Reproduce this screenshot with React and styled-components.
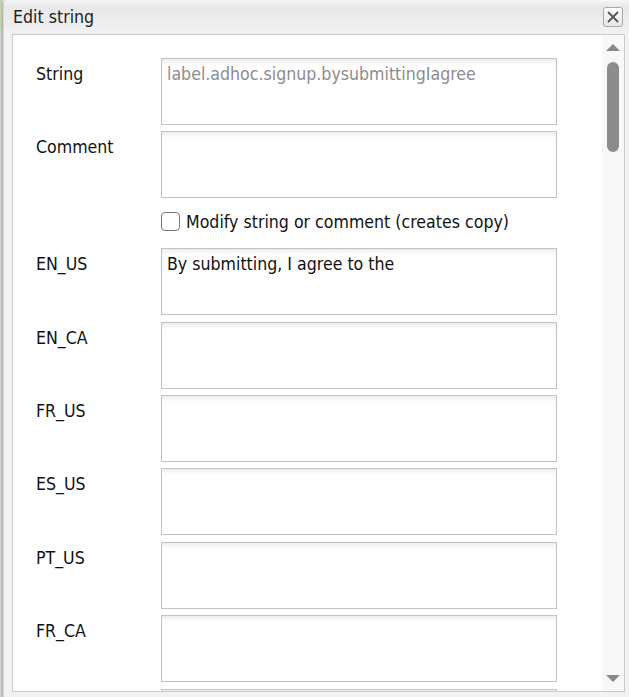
import { Fragment } from "react";
import styled, { createGlobalStyle } from "styled-components";

const GlobalStyle = createGlobalStyle`
  html, body {
    margin: 0;
    padding: 0;
    height: 100%;
    overflow: hidden;
    background: #f2f2f2;
  }
  #root {
    height: 100%;
  }
`;

const Page = styled.div`
  display: flex;
  height: 697px;
  font-family: "DejaVu Sans Condensed", "DejaVu Sans", sans-serif;
  font-size: 17.6px;
  color: #111;
`;

const Backdrop = styled.div`
  width: 3px;
  flex: none;
  background: linear-gradient(to bottom, #c6d0b6 0, #c6d0b6 30px, #cfcfcf 30px);
`;

const Dialog = styled.div`
  flex: 1;
  display: flex;
  flex-direction: column;
  background: #f2f2f2;
  border-top-left-radius: 5px;
  border-left: 1px solid #d6d6d6;
  box-shadow: -1px 0 2px rgba(0, 0, 0, 0.15);
  overflow: hidden;
`;

const TitleBar = styled.div`
  height: 34px;
  flex: none;
  display: flex;
  align-items: center;
  justify-content: space-between;
  padding: 0 6px 0 9px;
  background: linear-gradient(#f7f7f7 0, #e8e8e8 20%, #f1f1f1 100%);
`;

const Title = styled.span`
  color: #222;
  padding-bottom: 1px;
`;

const CloseButton = styled.button`
  width: 20px;
  height: 20px;
  padding: 0;
  display: flex;
  align-items: center;
  justify-content: center;
  border: 1px solid #a9a9a9;
  border-radius: 3px;
  background: linear-gradient(#ffffff, #e6e6e6);
  cursor: pointer;
`;

const Body = styled.div`
  flex: 1;
  min-height: 0;
  padding: 0 4px 5px 8px;
  display: flex;
`;

const Panel = styled.div`
  flex: 1;
  display: flex;
  min-height: 0;
  background: #fff;
  border: 1px solid #cbcbcb;
`;

const ScrollArea = styled.div`
  flex: 1;
  overflow: hidden;
  padding: 23px 0 0 23px;
`;

const Form = styled.div`
  display: grid;
  grid-template-columns: 125px 396px;
  row-gap: 6.4px;
`;

const Label = styled.div`
  padding-top: 6px;
  line-height: 20px;
  color: #111;
`;

const Field = styled.div`
  height: 67px;
  box-sizing: border-box;
  border: 1px solid #c3c3c3;
  background: #fff;
  box-shadow: inset 0 5px 6px -4px rgba(0, 0, 0, 0.12);
  padding: 5px 5px;
  line-height: 20px;
  white-space: nowrap;
  color: ${(p) => (p.$muted ? "#8c8c8c" : "#111")};
`;

const CheckRow = styled.label`
  grid-column: 2;
  height: 37px;
  display: flex;
  align-items: center;
  gap: 6px;
  padding-bottom: 3px;
  box-sizing: border-box;
`;

const Box = styled.span`
  width: 19px;
  height: 19px;
  box-sizing: border-box;
  border: 1.5px solid #767676;
  border-radius: 4px;
  background: #fff;
`;

const Scrollbar = styled.div`
  width: 22px;
  flex: none;
  background: #f8f8f8;
  display: flex;
  flex-direction: column;
  align-items: center;
  padding: 9px 0 9px;
  box-sizing: border-box;
`;

const Arrow = styled.div`
  width: 0;
  height: 0;
  border-left: 7px solid transparent;
  border-right: 7px solid transparent;
  ${(p) =>
    p.$down
      ? "border-top: 7px solid #8a8a8a; margin-top: auto;"
      : "border-bottom: 7px solid #8a8a8a;"}
`;

const Thumb = styled.div`
  width: 12px;
  height: 90px;
  margin-top: 11px;
  border-radius: 6px;
  background: #8c8c8c;
`;

const locales = [
  { code: "EN_US", value: "By submitting, I agree to the" },
  { code: "EN_CA", value: "" },
  { code: "FR_US", value: "" },
  { code: "ES_US", value: "" },
  { code: "PT_US", value: "" },
  { code: "FR_CA", value: "" },
  { code: "", value: "" },
];

export default function App() {
  return (
    <>
      <GlobalStyle />
      <Page>
        <Backdrop />
        <Dialog>
          <TitleBar>
            <Title>Edit string</Title>
            <CloseButton aria-label="Close">
              <svg width="12" height="12" viewBox="0 0 12 12">
                <path
                  d="M1.5 1.5 L10.5 10.5 M10.5 1.5 L1.5 10.5"
                  stroke="#555"
                  strokeWidth="1.8"
                  strokeLinecap="round"
                />
              </svg>
            </CloseButton>
          </TitleBar>
          <Body>
            <Panel>
              <ScrollArea>
                <Form>
                  <Label>String</Label>
                  <Field $muted>label.adhoc.signup.bysubmittingIagree</Field>
                  <Label>Comment</Label>
                  <Field />
                  <CheckRow>
                    <Box />
                    Modify string or comment (creates copy)
                  </CheckRow>
                  {locales.map((l, i) => (
                    <Fragment key={i}>
                      <Label>{l.code}</Label>
                      <Field>{l.value}</Field>
                    </Fragment>
                  ))}
                </Form>
              </ScrollArea>
              <Scrollbar>
                <Arrow />
                <Thumb />
                <Arrow $down />
              </Scrollbar>
            </Panel>
          </Body>
        </Dialog>
      </Page>
    </>
  );
}
